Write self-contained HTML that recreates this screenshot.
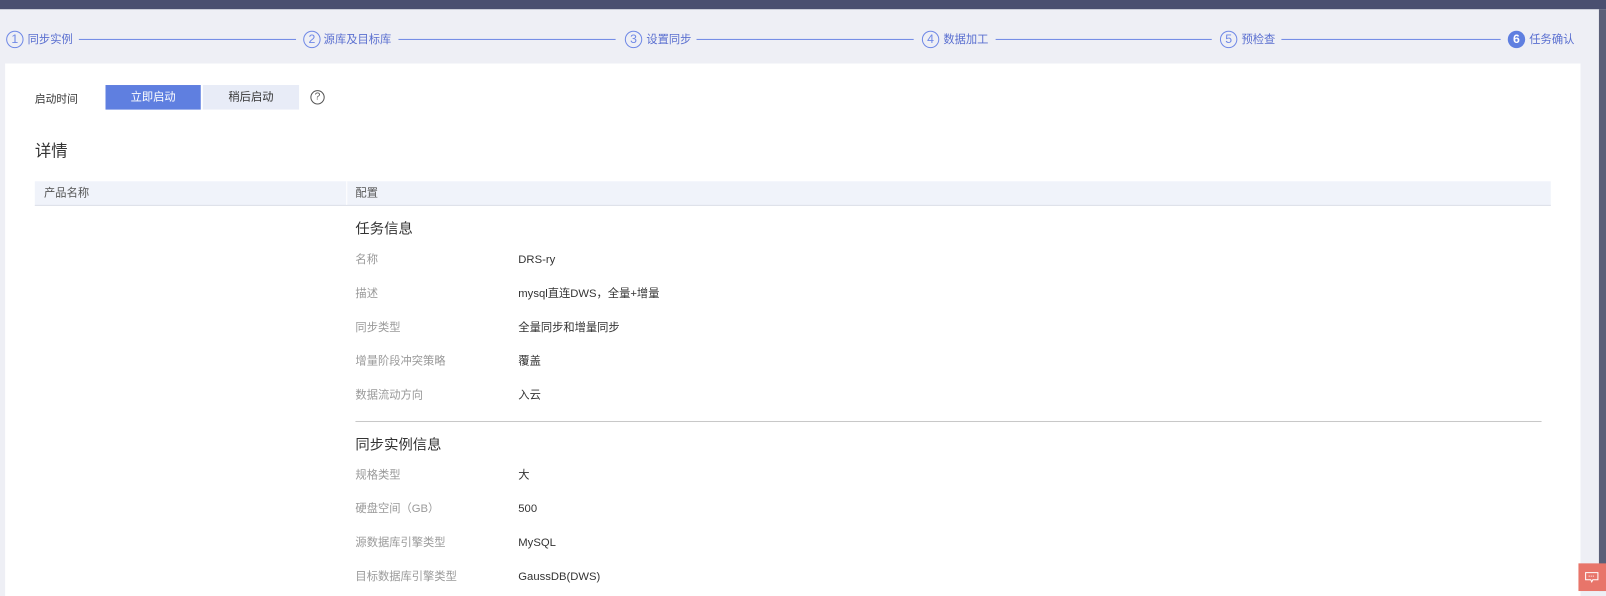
<!DOCTYPE html>
<html><head><meta charset="utf-8"><style>
*{margin:0;padding:0;box-sizing:border-box}
body{width:1606px;height:591px;overflow:hidden;background:#eeeff5;font-family:"Liberation Sans","Noto Sans CJK SC",sans-serif;font-size:11px;color:#333;position:relative}
#w{position:absolute;left:0;top:0;width:1568px;height:577px;transform:scale(1.0243);transform-origin:0 0}
.a{position:absolute;white-space:nowrap;line-height:14px}
.top{left:0;top:0;width:1568px;height:9px;background:#4a4f70}
.sb{left:1561px;top:9px;width:7px;height:568px;background:#5a5f78}
.panel{left:5px;top:62px;width:1538px;height:520px;background:#fff}
.c{position:absolute;top:30px;width:17px;height:17px;border:1px solid #6f88e6;border-radius:50%;color:#6f88e6;font-size:12px;text-align:center;line-height:15px}
.st{position:absolute;top:32px;color:#5a6fd0;font-size:11px;line-height:14px}
.ln{position:absolute;top:38px;height:1px;background:#6f88e6}
.lb{color:#999}
.v{color:#333}
</style></head><body><div id="w">
<div class="a top"></div>
<div class="a sb"></div>
<div class="c" style="left:6px">1</div><div class="st" style="left:27px">同步实例</div><div class="ln" style="left:77px;width:212px"></div>
<div class="c" style="left:296px">2</div><div class="st" style="left:316px">源库及目标库</div><div class="ln" style="left:389px;width:212px"></div>
<div class="c" style="left:610px">3</div><div class="st" style="left:631px">设置同步</div><div class="ln" style="left:680px;width:212px"></div>
<div class="c" style="left:900px">4</div><div class="st" style="left:921px">数据加工</div><div class="ln" style="left:972px;width:211px"></div>
<div class="c" style="left:1191px">5</div><div class="st" style="left:1212px">预检查</div><div class="ln" style="left:1251px;width:214px"></div>
<div class="c" style="left:1472px;background:#5f7fe0;border-color:#5f7fe0;color:#fff;font-weight:bold">6</div><div class="st" style="left:1493px">任务确认</div>
<div class="a panel"></div>
<div class="a" style="left:34px;top:90px;font-size:10.5px">启动时间</div>
<div class="a" style="left:103px;top:83px;width:93px;height:24px;background:#5f7fe0;color:#fff;text-align:center;line-height:24px">立即启动</div>
<div class="a" style="left:198px;top:83px;width:94px;height:24px;background:#e8ecf7;color:#333;text-align:center;line-height:24px">稍后启动</div>
<div class="a" style="left:303px;top:88px;width:14px;height:14px;border:1px solid #555;border-radius:50%;font-size:10px;text-align:center;line-height:12px;color:#555">?</div>
<div class="a" style="left:34px;top:139px;font-size:16px;line-height:20px">详情</div>
<div class="a" style="left:34px;top:177px;width:1480px;height:24px;background:#f0f3fa;border-bottom:1px solid #dcdfe8"></div>
<div class="a" style="left:338px;top:177px;width:1px;height:23px;background:#fff"></div>
<div class="a" style="left:43px;top:182px;color:#555">产品名称</div>
<div class="a" style="left:347px;top:182px;color:#555">配置</div>
<div class="a" style="left:347px;top:214px;font-size:14px;line-height:18px">任务信息</div>
<div class="a lb" style="left:347px;top:247px">名称</div><div class="a v" style="left:506px;top:247px">DRS-ry</div>
<div class="a lb" style="left:347px;top:280px">描述</div><div class="a v" style="left:506px;top:280px">mysql直连DWS，全量+增量</div>
<div class="a lb" style="left:347px;top:313px">同步类型</div><div class="a v" style="left:506px;top:313px">全量同步和增量同步</div>
<div class="a lb" style="left:347px;top:346px">增量阶段冲突策略</div><div class="a v" style="left:506px;top:346px">覆盖</div>
<div class="a lb" style="left:347px;top:379px">数据流动方向</div><div class="a v" style="left:506px;top:379px">入云</div>
<div class="a" style="left:347px;top:411px;width:1158px;height:1px;background:#c8c8c8"></div>
<div class="a" style="left:347px;top:425px;font-size:14px;line-height:18px">同步实例信息</div>
<div class="a lb" style="left:347px;top:457px">规格类型</div><div class="a v" style="left:506px;top:457px">大</div>
<div class="a lb" style="left:347px;top:490px">硬盘空间（GB）</div><div class="a v" style="left:506px;top:490px">500</div>
<div class="a lb" style="left:347px;top:523px">源数据库引擎类型</div><div class="a v" style="left:506px;top:523px">MySQL</div>
<div class="a lb" style="left:347px;top:556px">目标数据库引擎类型</div><div class="a v" style="left:506px;top:556px">GaussDB(DWS)</div>
<div class="a" style="left:1541px;top:550px;width:27px;height:27px;background:#e8756a"></div>
<svg class="a" style="left:1547px;top:558px" width="14" height="12" viewBox="0 0 14 12"><path d="M1 1h12v7H8l-1 2-1-2H1z" fill="none" stroke="#fff" stroke-width="1"/><path d="M4 4.5h6" stroke="#fff" stroke-dasharray="1 1"/></svg>
</div></body></html>
